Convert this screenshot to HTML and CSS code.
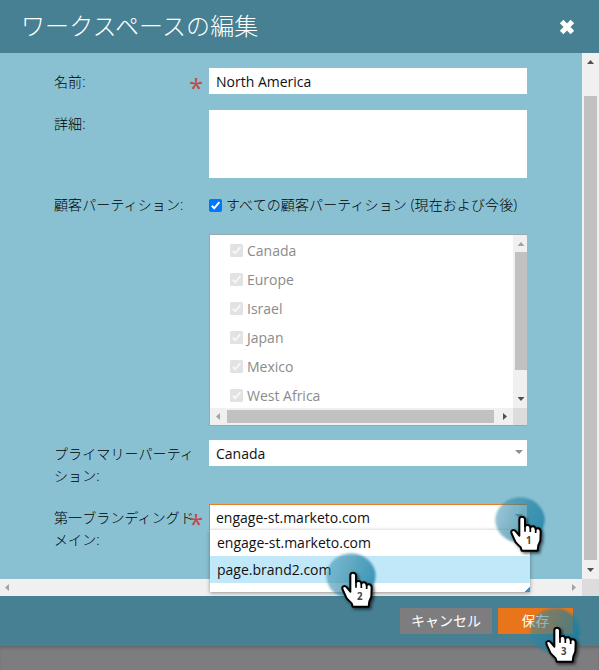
FILE: index.html
```html
<!DOCTYPE html>
<html lang="ja">
<head>
<meta charset="utf-8">
<title>ワークスペースの編集</title>
<link rel="stylesheet" href="styles.css">
</head>
<body>
<svg class="defs" width="0" height="0">
  <defs>
    <linearGradient id="halo" x1="0" y1="0" x2="1" y2="0.35">
      <stop offset="0" stop-color="#2987ac" stop-opacity="0.45"/>
      <stop offset="0.5" stop-color="#23809f" stop-opacity="0.6"/>
      <stop offset="1" stop-color="#167da3" stop-opacity="0.75"/>
    </linearGradient>
    <filter id="soft" x="-20%" y="-20%" width="140%" height="140%"><feGaussianBlur stdDeviation="2.5"/></filter>
    <filter id="drop" x="-30%" y="-30%" width="170%" height="170%"><feDropShadow dx="5" dy="5" stdDeviation="4" flood-color="#000" flood-opacity="0.65"/></filter>
    <g id="pointer">
      <ellipse cx="75" cy="69" rx="74" ry="68" fill="url(#halo)" filter="url(#soft)"/>
      <path transform="translate(0 27)" filter="url(#drop)" d="M73 78V39Q74 32 81 32Q88 32 90 39V61Q93 56 99 57Q105 58 106 65Q109 60 115 61Q121 62 122 70Q125 66 130 67Q137 69 137 77L136 104L130 118L128 134H80L77 124L62 109L51 85Q46 76 52 73Q59 70 65 79L73 89Z" fill="#fff" stroke="#000" stroke-width="6" stroke-linejoin="round"/>
      <path transform="translate(0 27)" d="M90 59V77M106 65V78M122 71V81" fill="none" stroke="#000" stroke-width="5"/>
    </g>
  </defs>
</svg>
<div class="dialog">
  <header class="head">
    <h1>ワークスペースの編集</h1>
    <svg class="close" width="16" height="16" viewBox="0 0 16 16"><path d="M2.6 2.6L13.4 13.4M13.4 2.6L2.6 13.4"/></svg>
  </header>
  <div class="viewport">
    <main class="form">
      <div class="row name">
        <div class="label">名前:<span class="req">*</span></div>
        <div class="field input">North America</div>
      </div>
      <div class="row detail">
        <div class="label">詳細:</div>
        <div class="field"></div>
      </div>
      <div class="row all">
        <div class="label">顧客パーティション:</div>
        <div class="check-line"><svg class="check on" viewBox="0 0 13 13"><rect width="13" height="13" rx="2"/><path d="M2.8 6.8L5.2 9.3L10.3 3.2"/></svg>すべての顧客パーティション (現在および今後)</div>
      </div>
      <div class="row parts">
        <div class="list">
          <ul>
            <li><svg class="check" viewBox="0 0 13 13"><rect width="13" height="13" rx="1.5"/><path d="M2.8 6.8L5.2 9.3L10.3 3.2"/></svg>Canada</li>
            <li><svg class="check" viewBox="0 0 13 13"><rect width="13" height="13" rx="1.5"/><path d="M2.8 6.8L5.2 9.3L10.3 3.2"/></svg>Europe</li>
            <li><svg class="check" viewBox="0 0 13 13"><rect width="13" height="13" rx="1.5"/><path d="M2.8 6.8L5.2 9.3L10.3 3.2"/></svg>Israel</li>
            <li><svg class="check" viewBox="0 0 13 13"><rect width="13" height="13" rx="1.5"/><path d="M2.8 6.8L5.2 9.3L10.3 3.2"/></svg>Japan</li>
            <li><svg class="check" viewBox="0 0 13 13"><rect width="13" height="13" rx="1.5"/><path d="M2.8 6.8L5.2 9.3L10.3 3.2"/></svg>Mexico</li>
            <li><svg class="check" viewBox="0 0 13 13"><rect width="13" height="13" rx="1.5"/><path d="M2.8 6.8L5.2 9.3L10.3 3.2"/></svg>West Africa</li>
          </ul>
          <div class="vbar"><i class="arrow up dim"></i><b class="thumb"></b><i class="arrow down"></i></div>
          <div class="hbar"><i class="arrow left dim"></i><b class="thumb"></b><i class="arrow right"></i></div>
          <div class="corner"></div>
        </div>
      </div>
      <div class="row primary">
        <div class="label">プライマリーパーティション:</div>
        <div class="field input">Canada<i class="arrow down trigger"></i></div>
      </div>
      <div class="row domain">
        <div class="label">第一ブランディングドメイン:<span class="req">*</span></div>
        <div class="field input active">engage-st.marketo.com<i class="arrow down trigger"></i>
          <div class="menu">
            <div class="option">engage-st.marketo.com</div>
            <div class="option selected">page.brand2.com</div>
          </div>
        </div>
      </div>
    </main>
    <div class="vbar"><i class="arrow up"></i><b class="thumb"></b><i class="arrow down"></i></div>
    <div class="hbar"><i class="arrow left dim"></i><i class="arrow right dim"></i></div>
    <div class="corner"></div>
  </div>
  <footer class="foot">
    <div class="btn cancel">キャンセル</div>
    <div class="btn save">保存</div>
  </footer>
  <div class="below"></div>
  <svg class="pin one" viewBox="0 0 165 165"><use href="#pointer"/><text x="101" y="142">1</text></svg>
  <svg class="pin two" viewBox="0 0 165 165"><use href="#pointer"/><text x="101" y="142">2</text></svg>
  <svg class="pin three" viewBox="0 0 165 165"><use href="#pointer"/><text x="101" y="142">3</text></svg>
</div>
</body>
</html>
```

FILE: styles.css
```css
* { box-sizing: border-box; }
body {
  margin: 0;
  font: 14px/22px "Open Sans", "Noto Sans CJK JP", sans-serif;
  color: #111;
}
.defs { position: absolute; }
.dialog { position: relative; width: 599px; height: 670px; overflow: hidden; }

.head {
  display: flex;
  align-items: center;
  justify-content: space-between;
  height: 53px;
  padding: 0 24px 0 21px;
  background: #468092;
}
h1 {
  margin: -3px 0 0;
  font: 300 24px/34px "Noto Sans CJK JP", sans-serif;
  letter-spacing: .1px;
  color: #fff;
}
.close path { stroke: #fff; stroke-width: 5; }

.viewport {
  display: grid;
  grid-template: 526px 17px / 582px 17px;
  background: #89c1d2;
}
.form { padding: 15px 0 0 54px; }
.row { display: grid; grid-template-columns: 155px 318px; }
.label {
  position: relative;
  width: 143px;
  padding-top: 3px;
  font-weight: 300;
  letter-spacing: .1px;
  color: #000;
  line-break: anywhere;
  word-break: break-all;
}
.req {
  position: absolute;
  top: 4px;
  left: 135px;
  font: 400 26px/30px "Open Sans", sans-serif;
  color: #c4494c;
}
.field { position: relative; background: #fff; }
.input { height: 26px; padding: 0 7px; line-height: 27px; }
.name { height: 42px; }
.detail { height: 84px; }
.detail .field { height: 68px; }
.all { height: 40px; }
.all .label { padding-top: 0; }
.check-line { display: flex; align-items: center; height: 22px; font-weight: 300; letter-spacing: .1px; color: #000; white-space: nowrap; }
.check { width: 13px; height: 13px; margin-right: 4px; flex: none; }
.check rect { fill: #e2e2e2; }
.check path { fill: none; stroke: #f6f6f6; stroke-width: 2; }
.check.on rect { fill: #0075ff; }
.check.on path { stroke: #fff; }

.list {
  grid-column: 2;
  display: grid;
  grid-template: 173px 17px / 303px 14px;
  height: 192px;
  border: 1px solid #94a9b8;
  border-right: 0;
  background: #fff;
  overflow: hidden;
}
ul { margin: 0; padding: 1px 0 0 20px; list-style: none; color: #8b8b8b; overflow: hidden; }
li { display: flex; align-items: center; height: 29px; }
.parts { height: 206px; }
.primary { height: 64px; }

.vbar, .hbar { display: flex; align-items: center; justify-content: space-between; background: #f0f0f0; }
.vbar { flex-direction: column; }
.thumb { background: #c1c1c1; }
.corner { background: #dcdcdc; }
.arrow { width: 7px; height: 4px; background: #505050; flex: none; }
.up { clip-path: polygon(50% 0, 100% 100%, 0 100%); }
.down { clip-path: polygon(0 0, 100% 0, 50% 100%); }
.left, .right { width: 4px; height: 7px; }
.left { clip-path: polygon(0 50%, 100% 0, 100% 100%); }
.right { clip-path: polygon(0 0, 100% 50%, 0 100%); }
.dim { background: #a3a3a3; }
.viewport > .vbar { padding: 7px 0; }
.viewport > .vbar .thumb { width: 13px; height: 464px; margin: auto 0 8px; }
.viewport > .hbar { padding: 0 6px 0 5px; }
.list .vbar { padding: 7px 0 7px 2px; }
.list .vbar .thumb { width: 12px; height: 118px; margin: 6px 0 auto; }
.list .hbar { padding: 0 6px; }
.list .hbar .thumb { width: 267px; height: 13px; margin: 0 auto 0 7px; }
.trigger { position: absolute; top: 10px; right: 4px; width: 8px; background: #8d8d94; }

.active { padding: 0 7px; line-height: 28px; box-shadow: inset 1px 1px #e88020; }
.menu {
  position: absolute;
  z-index: 1;
  top: 26px;
  left: 1px;
  width: 320px;
  height: 62px;
  background: linear-gradient(135deg, transparent 50%, #3d8fc4 50%) right bottom / 6px 6px no-repeat #fff;
  box-shadow: 0 1px 4px rgba(0, 0, 0, .4);
}
.option { height: 26px; padding-left: 7px; line-height: 26px; }
.selected { height: 27px; line-height: 28px; background: #c1e8f8; }

.foot {
  display: flex;
  gap: 6px;
  height: 50px;
  padding: 12px 0 0 400px;
  background: #468092;
}
.btn {
  width: 92px;
  height: 26px;
  font: 400 14px/25px "Noto Sans CJK JP", sans-serif;
  text-align: center;
  color: #fff;
  background: #7d7d80;
}
.save { width: 75px; background: #e87519; }
.below { height: 24px; background: #7d7d7f; box-shadow: inset 0 3px 3px -1px #68686b; }

.pin { position: absolute; z-index: 2; width: 55px; height: 55px; overflow: visible; }
.pin text { font: 700 29px "Open Sans", sans-serif; text-anchor: middle; fill: #444; }
.one { left: 495px; top: 497px; }
.two { left: 326px; top: 553px; }
.three { left: 530px; top: 608px; }
```
